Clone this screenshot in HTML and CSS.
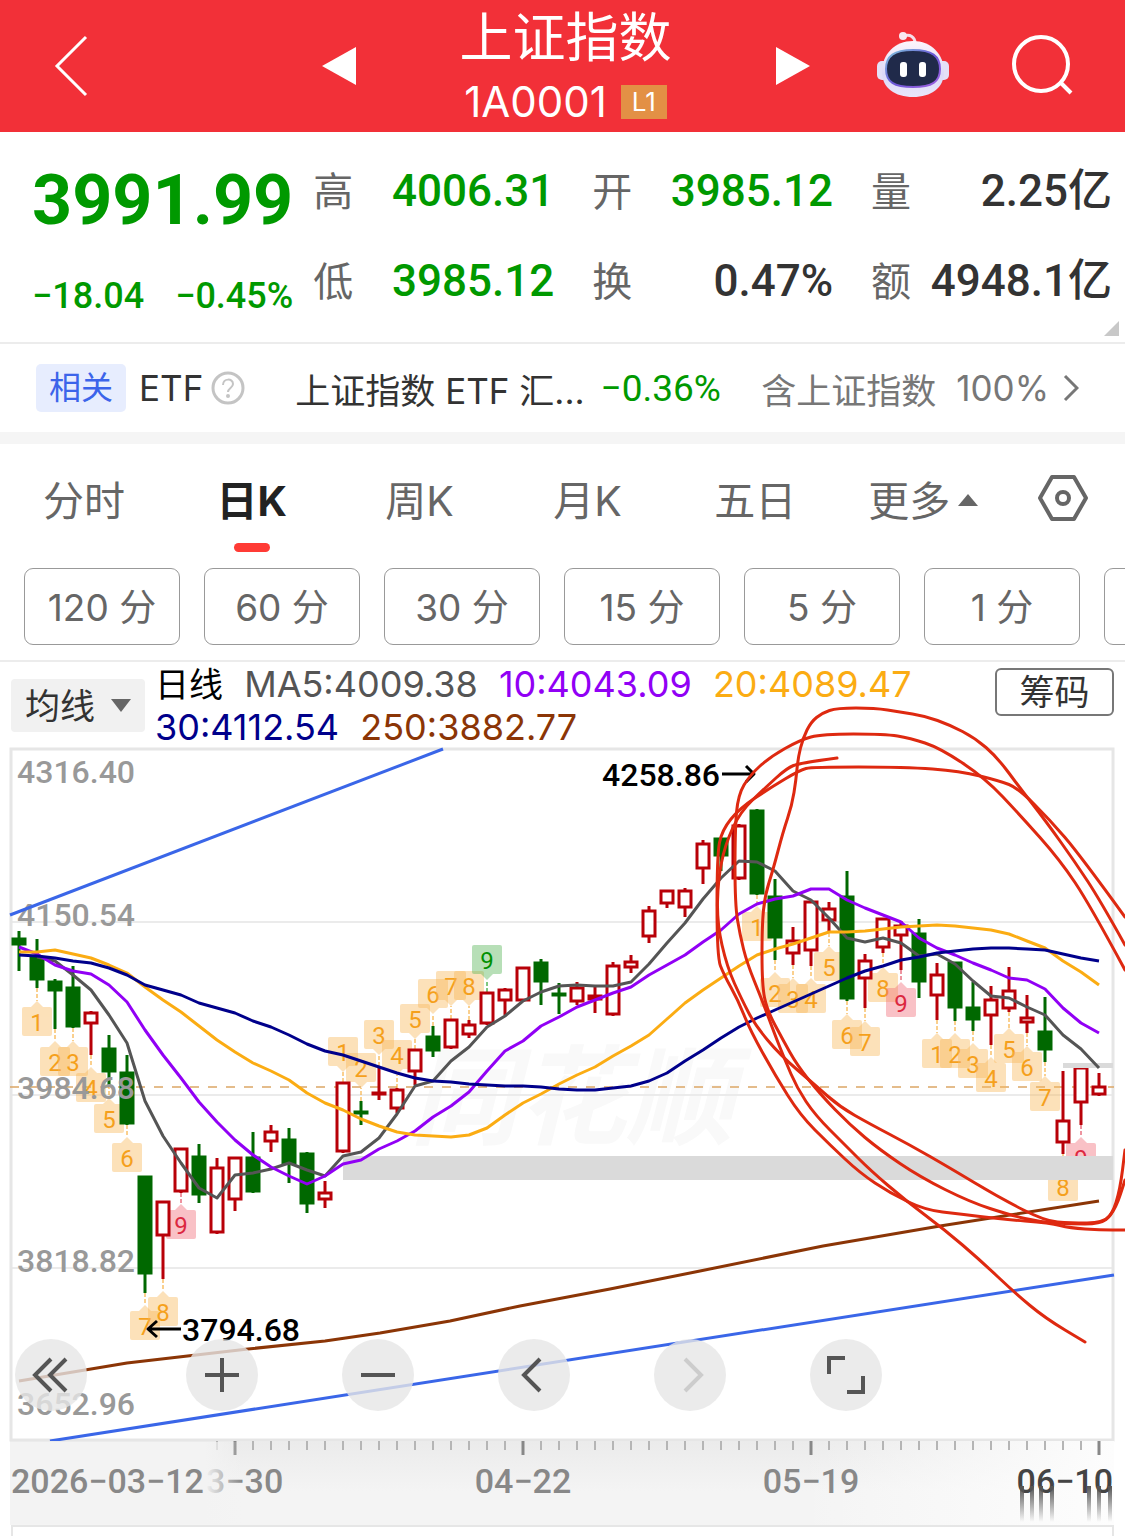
FILE: index.html
```html
<!DOCTYPE html>
<html lang="zh-CN">
<head>
    <meta charset="UTF-8">
    <meta name="viewport" content="width=device-width, initial-scale=1.0">
    <title>上证指数 1A0001</title>
    <link rel="stylesheet" href="styles.css">
</head>
<body>
    <header class="topbar">
        <button class="icon-btn" aria-label="返回">
            <svg width="34" height="62" viewBox="0 0 34 62"><path d="M32 2 3 31l29 29" fill="none" stroke="#fff" stroke-width="3"/></svg>
        </button>
        <div class="switcher">
            <button class="icon-btn" aria-label="上一个">
                <svg width="34" height="38" viewBox="0 0 34 38"><path d="M34 0v38L0 19z" fill="#fff"/></svg>
            </button>
            <div class="heading">
                <h1>上证指数</h1>
                <div class="code">1A0001 <span class="level">L1</span></div>
            </div>
            <button class="icon-btn" aria-label="下一个">
                <svg width="34" height="38" viewBox="0 0 34 38"><path d="M0 0v38l34-19z" fill="#fff"/></svg>
            </button>
        </div>
        <div class="tools">
            <button class="icon-btn" aria-label="智能助手">
                <svg width="72" height="68" viewBox="0 0 72 68">
                    <defs>
                        <linearGradient id="head" x1="0" y1="0" x2="0" y2="1">
                            <stop offset="0" stop-color="#fdf5fb"/><stop offset=".6" stop-color="#dcd9f7"/><stop offset="1" stop-color="#e9e6fb"/>
                        </linearGradient>
                        <linearGradient id="rim" x1="0" y1="0" x2="1" y2="1">
                            <stop offset="0" stop-color="#7fc6dc"/><stop offset=".5" stop-color="#6a58d6"/><stop offset="1" stop-color="#a05fe0"/>
                        </linearGradient>
                    </defs>
                    <path d="M27 4c6-2 11 1 11 7" fill="none" stroke="#f6dfe9" stroke-width="3"/>
                    <circle cx="26" cy="4" r="4" fill="#f9e9f2"/>
                    <rect x="0" y="29" width="12" height="19" rx="5" fill="#e4dff6"/>
                    <rect x="60" y="29" width="12" height="19" rx="5" fill="#e4dff6"/>
                    <path d="M36 9c18 0 31 13 31 31 0 16-13 25-31 25S5 56 5 40C5 22 18 9 36 9z" fill="url(#head)"/>
                    <path d="M36 18c19 0 27 6 27 19s-8 18-27 18S9 50 9 37s8-19 27-19z" fill="#202a4a" stroke="url(#rim)" stroke-width="2"/>
                    <rect x="23" y="30" width="7" height="15" rx="3" fill="#fff"/>
                    <rect x="42" y="30" width="7" height="15" rx="3" fill="#fff"/>
                </svg>
            </button>
            <button class="icon-btn" aria-label="搜索">
                <svg width="62" height="62" viewBox="0 0 62 62"><g fill="none" stroke="#fff" stroke-width="4"><circle cx="30" cy="29" r="27"/><path d="m49 47 11 11"/></g></svg>
            </button>
        </div>
    </header>

    <section class="quote">
        <div class="last">
            <div class="price">3991.99</div>
            <div class="change"><span>−18.04</span><span>−0.45%</span></div>
        </div>
        <dl class="stats">
            <div><dt>高</dt><dd class="down">4006.31</dd></div>
            <div><dt>开</dt><dd class="down">3985.12</dd></div>
            <div><dt>量</dt><dd>2.25亿</dd></div>
            <div><dt>低</dt><dd class="down">3985.12</dd></div>
            <div><dt>换</dt><dd>0.47%</dd></div>
            <div><dt>额</dt><dd>4948.1亿</dd></div>
        </dl>
        <span class="corner"></span>
    </section>

    <a class="related" href="#etf">
        <span class="tag">相关</span>
        <span class="kind">ETF</span>
        <svg width="34" height="34" viewBox="0 0 34 34"><circle cx="17" cy="17" r="15" fill="none" stroke="#c4c4c4" stroke-width="3"/><path d="M12 14c0-7 10-7 10-1 0 4-5 4-5 8" fill="none" stroke="#c4c4c4" stroke-width="2"/><circle cx="17" cy="25" r="2" fill="#c4c4c4"/></svg>
        <span class="fund">上证指数 ETF 汇...</span>
        <span class="fund-change">−0.36%</span>
        <span class="holding">含上证指数</span>
        <span class="ratio">100%</span>
        <svg width="16" height="28" viewBox="0 0 16 28"><path d="m2 2 12 12L2 26" fill="none" stroke="#777" stroke-width="3"/></svg>
    </a>

    <nav class="tabs">
        <button>分时</button>
        <button class="active">日K</button>
        <button>周K</button>
        <button>月K</button>
        <button>五日</button>
        <button>更多<span class="caret-up"></span></button>
        <button class="settings" aria-label="设置">
            <svg width="52" height="46" viewBox="0 0 52 46"><g fill="none" stroke="#666" stroke-width="4"><path d="M15 2h22l12 21-12 21H15L3 23z" stroke-linejoin="round"/><circle cx="26" cy="23" r="6"/></g></svg>
        </button>
    </nav>

    <div class="periods">
        <button>120 分</button>
        <button>60 分</button>
        <button>30 分</button>
        <button>15 分</button>
        <button>5 分</button>
        <button>1 分</button>
        <button aria-label="更多周期"></button>
    </div>

    <div class="legend">
        <label class="indicator">
            <select aria-label="指标"><option>均线</option></select>
            <span class="caret-down"></span>
        </label>
        <p class="averages">
            <span class="ma-title">日线</span>
            <span class="ma5">MA5:4009.38</span>
            <span class="ma10">10:4043.09</span>
            <span class="ma20">20:4089.47</span><br>
            <span class="ma30">30:4112.54</span>
            <span class="ma250">250:3882.77</span>
        </p>
        <button class="chips">筹码</button>
    </div>

    <main class="chart">
        <svg id="kline" viewBox="0 748 1125 777" role="img" aria-label="日K线图"></svg>
        <div class="chart-tools">
            <button class="first" aria-label="最早"><svg width="40" height="40" viewBox="0 0 40 40"><path d="M20 4 4 20l16 16M35 4 19 20l16 16"/></svg></button>
            <button aria-label="放大"><svg width="40" height="40" viewBox="0 0 40 40"><path d="M20 3v34M3 20h34"/></svg></button>
            <button aria-label="缩小"><svg width="40" height="40" viewBox="0 0 40 40"><path d="M3 20h34"/></svg></button>
            <button aria-label="向前"><svg width="40" height="40" viewBox="0 0 40 40"><path d="M26 4 10 20l16 16"/></svg></button>
            <button aria-label="向后" disabled><svg width="40" height="40" viewBox="0 0 40 40"><path d="m15 4 16 16-16 16"/></svg></button>
            <button aria-label="全屏"><svg width="40" height="40" viewBox="0 0 40 40"><path d="M3 19V3h16M37 21v16H21"/></svg></button>
        </div>
    </main>
    <div class="next-panel"></div>

    <script src="chart.js"></script>
</body>
</html>
```
FILE: styles.css
```css
* {
    box-sizing: border-box;
}
body {
    margin: 0;
    background: #fff;
    color: #333;
    font-family: Inter, "Noto Sans CJK SC", sans-serif;
    overflow-x: hidden;
}
button {
    padding: 0;
    border: 0;
    background: none;
    color: inherit;
    font: inherit;
    cursor: pointer;
}
svg {
    display: block;
}

/* top bar */
.topbar {
    display: grid;
    grid-template-columns: 1fr 488px 1fr;
    align-items: center;
    height: 132px;
    padding: 0 48px 2px 54px;
    background: #f23038;
    color: #fff;
}
.icon-btn {
    justify-self: start;
}
.switcher,
.tools {
    display: flex;
    align-items: center;
    justify-content: space-between;
}
.tools {
    justify-content: flex-end;
    gap: 62px;
    padding-right: 4px;
}
.heading {
    padding-top: 4px;
    text-align: center;
}
.heading h1 {
    margin: 0;
    font-size: 53px;
    line-height: 68px;
    font-weight: 400;
}
.code {
    display: flex;
    align-items: center;
    justify-content: center;
    gap: 14px;
    font-size: 42px;
    line-height: 60px;
}
.level {
    padding: 0 11px;
    background: #e39045;
    font-size: 26px;
    line-height: 34px;
}

/* quote */
.quote {
    position: relative;
    display: flex;
    gap: 20px;
    height: 212px;
    padding: 14px 13px 0 32px;
    border-bottom: 2px solid #ececec;
    font-family: Roboto, "Noto Sans CJK SC", sans-serif;
    font-weight: 500;
}
.last {
    color: #009900;
}
.price {
    font-size: 70px;
    line-height: 108px;
    font-weight: 700;
}
.change {
    display: flex;
    justify-content: space-between;
    font-size: 36px;
    line-height: 84px;
}
.stats {
    flex: 1;
    display: grid;
    grid-template-columns: repeat(3, 1fr);
    grid-auto-rows: 90px;
    column-gap: 38px;
    margin: 0;
}
.stats div {
    display: flex;
    justify-content: space-between;
    line-height: 90px;
}
.stats dt {
    padding-top: 2px;
    color: #666;
    font-size: 40px;
    font-weight: 400;
}
.stats dd {
    margin: 0;
    font-size: 44px;
    white-space: nowrap;
}
.stats .down {
    color: #009900;
}
.corner {
    position: absolute;
    right: 6px;
    bottom: 6px;
    border-left: 15px solid transparent;
    border-bottom: 15px solid #c8c8c8;
}

/* related fund */
.related {
    display: flex;
    align-items: center;
    height: 100px;
    padding: 0 46px 0 36px;
    border-bottom: 12px solid #f5f5f5;
    color: #333;
    font-size: 35px;
    text-decoration: none;
    white-space: nowrap;
}
.tag {
    margin-right: 13px;
    padding: 0 13px;
    border-radius: 5px;
    background: #e7edfe;
    color: #3c64ea;
    font-size: 32px;
    line-height: 48px;
}
.kind {
    margin-right: 8px;
}
.fund {
    margin-left: 50px;
}
.fund-change {
    margin-left: 16px;
    color: #009900;
    font-family: Roboto, sans-serif;
    font-size: 37px;
}
.holding {
    margin-left: auto;
    color: #777;
}
.ratio {
    margin: 0 14px 0 20px;
    color: #777;
}

/* period tabs */
.tabs {
    display: flex;
    height: 124px;
    padding-right: 6px;
    color: #666;
    font-size: 41px;
}
.tabs button {
    position: relative;
    flex: 0 0 15%;
    height: 108px;
}
.tabs .active {
    color: #222;
    font-weight: 700;
}
.tabs .active::after {
    content: "";
    position: absolute;
    left: 50%;
    bottom: 0;
    width: 36px;
    height: 9px;
    margin-left: -18px;
    border-radius: 5px;
    background: #ff3b35;
}
.tabs .settings {
    display: flex;
    flex: 1;
    align-items: center;
    justify-content: center;
}
.caret-up,
.caret-down {
    display: inline-block;
    border: 10px solid transparent;
}
.caret-up {
    margin-left: 8px;
    border-top: 0;
    border-bottom: 12px solid #666;
    vertical-align: 10px;
}
.caret-down {
    border-bottom: 0;
    border-top: 13px solid #666;
}
.periods {
    display: flex;
    gap: 24px;
    height: 94px;
    padding-left: 24px;
    border-bottom: 2px solid #ececec;
    overflow: hidden;
}
.periods button {
    flex: 0 0 156px;
    height: 77px;
    padding-bottom: 4px;
    border: 1px solid #999;
    border-radius: 9px;
    color: #666;
    font-size: 37px;
}

/* moving averages */
.legend {
    display: flex;
    align-items: flex-start;
    height: 86px;
    padding: 0 11px;
}
.indicator {
    display: flex;
    align-items: center;
    height: 53px;
    margin-top: 17px;
    padding: 0 14px;
    border-radius: 4px;
    background: #f1f1f1;
}
.indicator select {
    width: 86px;
    padding: 0;
    border: 0;
    background: none;
    color: #333;
    font: inherit;
    font-size: 35px;
    appearance: none;
}
.averages {
    flex: 1;
    margin: 1px 0 0 10px;
    font-size: 36px;
    line-height: 42px;
    white-space: nowrap;
}
.averages span {
    margin-right: 11px;
}
.ma-title {
    color: #000;
    font-size: 34px;
}
.ma5 {
    color: #555;
}
.ma10 {
    color: #9100f5;
}
.ma20 {
    color: #fbac13;
}
.ma30 {
    color: #00008b;
}
.ma250 {
    color: #8b3506;
}
.chips {
    width: 119px;
    height: 48px;
    margin-top: 6px;
    border: 2px solid #777;
    border-radius: 6px;
    font-size: 35px;
    line-height: 42px;
}

/* chart */
.chart {
    position: relative;
}
#kline {
    position: relative;
    width: 100%;
    overflow: visible;
    font-family: Roboto, "Noto Sans CJK SC", sans-serif;
    font-weight: 500;
    pointer-events: none;
}
.frame {
    fill: none;
    stroke: #e6e6e6;
    stroke-width: 3;
}
.grid {
    stroke: #ebebeb;
    stroke-width: 2;
}
.watermark {
    fill: #f9f9f9;
    font-size: 108px;
    font-style: italic;
    font-weight: 700;
}
.line {
    fill: none;
    stroke-width: 3;
    stroke-linejoin: round;
}
.pen {
    fill: none;
    stroke: #de2910;
    stroke-width: 3;
    stroke-linecap: round;
}
.candle-up {
    fill: #fff;
    stroke: #b80008;
    stroke-width: 3;
}
.candle-down {
    fill: #006800;
    stroke: #006800;
    stroke-width: 3;
}
.badge {
    font-size: 24px;
    font-weight: 400;
    text-anchor: middle;
}
.scale {
    fill: #999;
    font-size: 32px;
}
.extreme {
    fill: #000;
    font-size: 32px;
}
.date {
    fill: #888;
    font-size: 34px;
}
.chart-tools {
    position: absolute;
    left: 15px;
    bottom: 114px;
    display: flex;
    gap: 84px;
}
.chart-tools button {
    display: flex;
    align-items: center;
    justify-content: center;
    width: 72px;
    height: 72px;
    border-radius: 50%;
    background: rgba(230, 230, 230, 0.8);
}
.chart-tools .first {
    margin-right: 15px;
}
.chart-tools path {
    fill: none;
    stroke: #555;
    stroke-width: 4;
}
.chart-tools button:disabled path {
    stroke: #ccc;
}
.next-panel {
    height: 11px;
    margin: 0 11px;
    border: 2px solid #e6e6e6;
    border-bottom: 0;
}
```
FILE: chart.js
```js
const svg = document.getElementById("kline");
const STEP = 18;
const FIRST = 19;
const x = i => FIRST + STEP * i;

// direction, high, body top, body bottom, low
const candles = [
    ["d", 931, 938, 946, 971], ["d", 939, 957, 981, 988], ["d", 979, 981, 992, 1029], ["d", 966, 987, 1028, 1028],
    ["u", 1011, 1012, 1025, 1055], ["d", 1035, 1048, 1073, 1085], ["d", 1055, 1072, 1125, 1125], ["d", 1176, 1176, 1275, 1293],
    ["u", 1201, 1201, 1237, 1279], ["u", 1148, 1148, 1193, 1193], ["d", 1144, 1156, 1196, 1203], ["u", 1158, 1167, 1234, 1234],
    ["u", 1157, 1157, 1201, 1211], ["d", 1132, 1157, 1193, 1193], ["u", 1125, 1131, 1143, 1152], ["d", 1128, 1139, 1165, 1183],
    ["d", 1152, 1153, 1205, 1213], ["u", 1181, 1192, 1201, 1208], ["u", 1082, 1082, 1153, 1153], ["d", 1101, 1111, 1115, 1125],
    ["u", 1066, 1092, 1095, 1100], ["u", 1088, 1089, 1110, 1113], ["u", 1049, 1049, 1073, 1085], ["d", 1026, 1036, 1052, 1057],
    ["u", 1019, 1019, 1049, 1049], ["u", 1020, 1024, 1036, 1038], ["u", 992, 992, 1025, 1025], ["u", 988, 989, 1002, 1015],
    ["u", 967, 967, 1002, 1002], ["d", 959, 962, 983, 1005], ["d", 983, 993, 997, 1014], ["u", 982, 987, 1003, 1005],
    ["u", 986, 995, 1001, 1013], ["u", 962, 965, 1016, 1016], ["u", 955, 961, 969, 973], ["u", 906, 910, 938, 943],
    ["u", 890, 890, 905, 908], ["u", 888, 890, 909, 917], ["u", 840, 843, 870, 884], ["d", 838, 838, 857, 871],
    ["u", 824, 825, 880, 880], ["d", 809, 810, 895, 895], ["d", 879, 896, 939, 960], ["u", 927, 940, 955, 965],
    ["u", 901, 901, 952, 966], ["u", 902, 908, 922, 933], ["d", 871, 896, 1000, 1001], ["u", 954, 960, 980, 1008],
    ["u", 918, 918, 949, 953], ["u", 921, 925, 937, 970], ["d", 919, 933, 983, 998], ["u", 963, 974, 997, 1020],
    ["d", 962, 962, 1009, 1021], ["d", 982, 1007, 1021, 1031], ["u", 986, 999, 1017, 1045], ["u", 967, 990, 1010, 1012],
    ["u", 995, 1017, 1024, 1033], ["d", 997, 1031, 1051, 1062], ["u", 1071, 1120, 1144, 1154], ["u", 1067, 1067, 1104, 1125],
    ["u", 1073, 1086, 1096, 1096]
];

// candle index, count, top of the box, box above the candle
const badges = [
    [1, 1, 1007], [2, 2, 1047], [3, 3, 1047], [4, 4, 1073], [5, 5, 1104], [6, 6, 1143], [7, 7, 1311], [8, 8, 1297], [9, 9, 1210],
    [18, 1, 1037, true], [19, 2, 1053, true], [20, 3, 1020, true], [21, 4, 1040, true], [22, 5, 1004, true],
    [23, 6, 979, true], [24, 7, 971, true], [25, 8, 971, true], [26, 9, 945, true],
    [41, 1, 912], [42, 2, 978], [43, 3, 984], [44, 4, 984], [45, 5, 952], [46, 6, 1020], [47, 7, 1027], [48, 8, 973], [49, 9, 988],
    [51, 1, 1039], [52, 2, 1039], [53, 3, 1049], [54, 4, 1063], [55, 5, 1034], [56, 6, 1052], [57, 7, 1082], [58, 8, 1172], [59, 9, 1143]
];

// one value for each candle, starting at the given index
const averages = [
    ["#555555", 1, [957, 961, 975, 990, 1015, 1043, 1101, 1136, 1163, 1188, 1198, 1175, 1173, 1169, 1163, 1170, 1176, 1156, 1152, 1138, 1114, 1086, 1081, 1061, 1047, 1027, 1016, 1001, 992, 986, 985, 986, 986, 982, 964, 943, 923, 899, 878, 861, 862, 871, 891, 900, 918, 938, 942, 938, 943, 956, 954, 964, 981, 996, 998, 1007, 1015, 1035, 1049, 1068]],
    ["#9100f5", 0, [947, 954, 965, 971, 974, 985, 1002, 1030, 1055, 1078, 1102, 1122, 1140, 1155, 1167, 1176, 1184, 1176, 1164, 1160, 1149, 1141, 1131, 1117, 1106, 1092, 1071, 1051, 1041, 1026, 1017, 1007, 1000, 993, 987, 975, 965, 955, 942, 930, 914, 904, 899, 896, 889, 889, 900, 908, 915, 922, 938, 948, 955, 963, 970, 978, 980, 989, 1008, 1023, 1033]],
    ["#fbac13", 0, [952, 952, 950, 954, 958, 965, 973, 987, 1000, 1012, 1026, 1040, 1052, 1063, 1071, 1080, 1093, 1103, 1110, 1119, 1126, 1132, 1135, 1136, 1137, 1135, 1128, 1115, 1103, 1094, 1084, 1075, 1067, 1056, 1046, 1035, 1019, 1003, 990, 978, 966, 955, 949, 944, 938, 932, 932, 931, 929, 927, 926, 925, 926, 928, 930, 934, 941, 948, 961, 972, 985]],
    ["#00008b", 0, [955, 956, 958, 961, 963, 968, 975, 985, 990, 995, 1003, 1008, 1013, 1021, 1027, 1035, 1044, 1051, 1055, 1061, 1067, 1073, 1078, 1081, 1082, 1084, 1085, 1086, 1086, 1087, 1089, 1090, 1090, 1088, 1086, 1081, 1073, 1061, 1050, 1038, 1027, 1018, 1010, 1002, 994, 986, 978, 971, 966, 960, 957, 953, 951, 949, 948, 948, 949, 950, 954, 958, 961]]
];

const strokes = [
    [[1125, 945], [1100, 900], [1075, 862], [1045, 820], [1020, 788], [997, 757], [975, 738], [950, 725], [925, 716], [900, 712], [875, 708], [837, 708], [822, 713], [811, 722], [803, 738], [798, 758], [796, 780], [792, 805], [783, 832], [773, 870], [765, 895], [762, 925], [762, 985], [767, 1010], [783, 1040], [797, 1065], [820, 1094], [850, 1125], [880, 1150], [920, 1177], [970, 1202], [1010, 1215], [1040, 1222], [1070, 1224], [1100, 1224], [1112, 1215], [1120, 1190], [1125, 1150]],
    [[1125, 970], [1090, 905], [1060, 860], [1020, 815], [985, 778], [940, 748], [910, 738], [885, 734], [822, 734], [800, 740], [770, 757], [750, 775], [738, 795], [735, 830], [735, 905], [740, 935], [747, 963], [762, 1000], [775, 1035], [785, 1060], [797, 1088], [815, 1115], [845, 1145], [870, 1170], [905, 1200], [945, 1230], [980, 1260], [1015, 1293], [1045, 1318], [1085, 1342]],
    [[1125, 917], [1080, 855], [1050, 820], [1018, 788], [1000, 781], [960, 771], [905, 767], [812, 767], [800, 770], [770, 788], [740, 808], [722, 830], [717, 855], [717, 957], [724, 975], [738, 1000], [750, 1030], [775, 1075], [800, 1115], [830, 1145], [860, 1173], [890, 1193], [925, 1210], [960, 1214], [1000, 1219], [1050, 1223], [1070, 1228], [1100, 1230], [1125, 1230]],
    [[837, 758], [800, 763], [787, 768], [765, 788], [740, 812], [725, 845], [718, 880], [717, 923], [727, 967], [742, 1000], [755, 1025], [780, 1055], [815, 1085], [840, 1107], [870, 1124], [910, 1145], [950, 1168], [1000, 1198], [1045, 1221], [1070, 1223], [1104, 1223], [1116, 1208], [1125, 1180]]
];

function drawCandle([dir, high, top, bottom, low], i) {
    const cx = x(i);
    const cls = dir === "u" ? "candle-up" : "candle-down";
    const h = Math.max(bottom - top - 3, 1);
    return `<g class="${cls}"><path d="M${cx} ${high}V${top + 1}M${cx} ${bottom - 1}V${low}"/>
        <rect x="${cx - 6}" y="${top + 1}" width="12" height="${h}"/></g>`;
}

function drawBadge([i, n, top, above]) {
    const cx = x(i);
    let box = "#f9b85a", text = "#f5a01c";
    if (n === 9) {
        box = above ? "#55b455" : "#f26d78";
        text = above ? "#009000" : "#dc2840";
    }
    const edge = above ? top + 29 : top;
    const tip = above ? edge + 6 : edge - 6;
    const end = above ? candles[i][1] : candles[i][4];
    return `<path d="M${cx} ${end}V${tip}" stroke="${text}" stroke-width="1" stroke-dasharray="4 2"/>
        <g fill="${box}" opacity="0.42"><rect x="${cx - 15}" y="${top}" width="30" height="29" rx="2"/>
        <path d="M${cx - 6} ${edge}L${cx} ${tip}L${cx + 6} ${edge}z"/></g>
        <text class="badge" x="${cx}" y="${top + 24}" fill="${text}">${n}</text>`;
}

function polyline(color, points) {
    return `<polyline class="line" stroke="${color}" points="${points.join(" ")}"/>`;
}

// smooth path through the midpoints
function penPath(p) {
    let d = `M${p[0]}`;
    for (let i = 1; i < p.length - 1; i++) {
        d += `Q${p[i]} ${(p[i][0] + p[i + 1][0]) / 2},${(p[i][1] + p[i + 1][1]) / 2}`;
    }
    return `<path class="pen" d="${d}L${p[p.length - 1]}"/>`;
}

let out = `<defs>
    <linearGradient id="axis" x1="0" y1="0" x2="0" y2="1"><stop offset="0" stop-color="#ebebeb"/><stop offset=".6" stop-color="#f4f4f4"/></linearGradient>
    <linearGradient id="fadeL"><stop offset=".84" stop-color="#f3f3f3"/><stop offset="1" stop-color="#f3f3f3" stop-opacity="0"/></linearGradient>
    <linearGradient id="fadeR"><stop offset="0" stop-color="#fdfdfd" stop-opacity="0"/><stop offset="1" stop-color="#fdfdfd"/></linearGradient>
    <linearGradient id="streak" x1="0" y1="0" x2="0" y2="1"><stop offset="0" stop-color="#555"/><stop offset="1" stop-color="#555" stop-opacity="0"/></linearGradient>
    </defs>
    <text class="watermark" x="410" y="1136">同花顺</text>`;

for (const y of [922, 1095, 1268]) {
    out += `<path class="grid" d="M11 ${y}H1113"/>`;
}
out += `<rect class="frame" x="11" y="749" width="1102" height="691"/>`;
out += `<path d="M10 1087H1114" stroke="#dba665" stroke-width="1.5" stroke-dasharray="9 9"/>`;
out += badges.map(drawBadge).join("");
out += candles.map(drawCandle).join("");
out += `<rect x="343" y="1156" width="770" height="24" fill="#dadada"/><rect x="1063" y="1063" width="50" height="5" fill="#dadada"/>`;

for (const [key, y] of [["4316.40", 783], ["4150.54", 926], ["3984.68", 1099], ["3818.82", 1272], ["3652.96", 1415]]) {
    out += `<text class="scale" x="17" y="${y}">${key}</text>`;
}

for (const [color, start, values] of averages) {
    out += polyline(color, values.map((v, i) => [x(start + i), v]));
}
out += polyline("#8b3506", [[19, 1381], [127, 1363], [248, 1349], [325, 1341], [380, 1333], [450, 1321], [520, 1306], [610, 1289], [700, 1271], [823, 1246], [940, 1226], [1099, 1201]]);
out += polyline("#3a66e8", [[10, 915], [443, 749]]);
out += polyline("#3a66e8", [[50, 1441], [1114, 1275]]);

out += `<text class="extreme" x="602" y="786">4258.86</text><path class="line" stroke="#000" d="M722 774H754M746 766l8 8-8 8"/>`;
out += `<text class="extreme" x="182" y="1341">3794.68</text><path class="line" stroke="#000" d="M181 1329H148M157 1321l-9 8 9 8"/>`;

// date axis
out += `<rect x="10" y="1441" width="1103" height="84" fill="url(#axis)"/><rect x="800" y="1441" width="314" height="84" fill="url(#fadeR)"/>`;
for (let i = 11; i <= 60; i++) {
    const major = i % 16 === 12;
    out += `<path d="M${x(i)} 1441v${major ? 14 : 9}" stroke="${major ? "#888" : "#b5b5b5"}" stroke-width="${major ? 3 : 2}"/>`;
}
out += `<text class="date" x="235" y="1493" text-anchor="middle">03−30</text>
    <rect x="10" y="1442" width="232" height="82" fill="url(#fadeL)"/>
    <text class="date" x="11" y="1493">2026−03−12</text>
    <text class="date" x="523" y="1493" text-anchor="middle">04−22</text>
    <text class="date" x="811" y="1493" text-anchor="middle">05−19</text>
    <text class="date" x="1113" y="1493" text-anchor="end" style="fill:#444">06−10</text>`;
for (const sx of [1020, 1030, 1039, 1050, 1087, 1097, 1108]) {
    out += `<rect x="${sx}" y="1486" width="4" height="36" fill="url(#streak)"/>`;
}

out += strokes.map(penPath).join("");
svg.innerHTML = out;
```
